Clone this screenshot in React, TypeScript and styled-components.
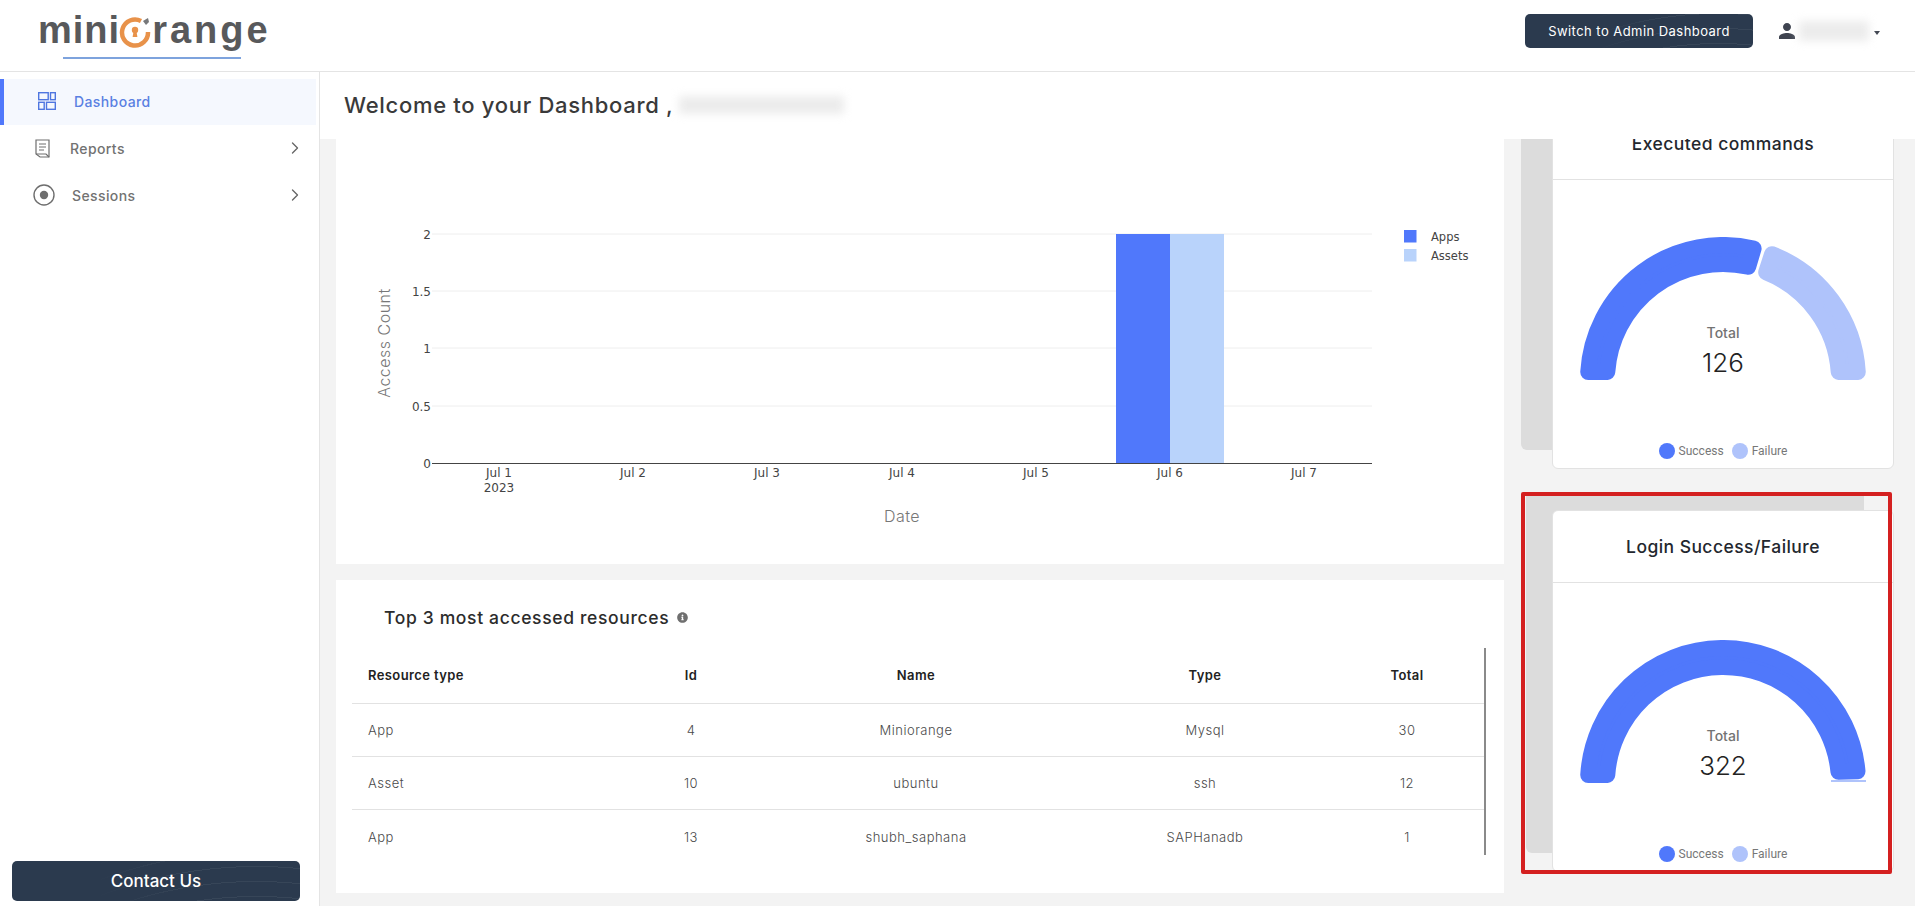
import { ChevronRight } from "lucide-react";
import { FaInfoCircle } from "react-icons/fa";
import { MdPerson } from "react-icons/md";
import styled, { createGlobalStyle } from "styled-components";

const BLUE = "#5078fb";
const LIGHT_BLUE = "#afc3fb";
const BAR_LIGHT = "#b9d3fb";
const UI_FONT = `Inter, "Noto Sans", sans-serif`;

const GlobalStyle = createGlobalStyle`
  html, body {
    margin: 0;
    padding: 0;
    background: #fff;
    font-family: ${UI_FONT};
  }
  * {
    box-sizing: border-box;
  }
`;

const Page = styled.div`
  width: 1915px;
  height: 906px;
  overflow: hidden;
  display: flex;
  flex-direction: column;
`;

const Header = styled.header`
  height: 72px;
  flex: none;
  display: flex;
  align-items: flex-start;
  justify-content: space-between;
  border-bottom: 1px solid #e4e4e4;
  padding: 14px 35px 0 38px;
`;

const LogoBox = styled.div`
  display: flex;
  flex-direction: column;
  margin-top: -6px;
`;

const LogoWord = styled.div`
  display: flex;
  align-items: center;
  height: 44px;
  color: #58595b;
  font-family: "Liberation Sans", sans-serif;
  font-size: 38px;
  font-weight: 700;
`;

const LogoPart = styled.span<{ $spacing: number }>`
  letter-spacing: ${(p) => p.$spacing}px;
  line-height: 44px;
`;

const LogoRing = styled.svg`
  width: 32px;
  height: 32px;
  flex: none;
  margin: 4px 1px 0 -1px;
`;

const LogoLine = styled.div`
  width: 178px;
  height: 2px;
  margin: 5px 0 0 25px;
  background: #7ea3dd;
`;

const HeaderRight = styled.div`
  display: flex;
  align-items: center;
`;

const DarkButton = styled.button<{ $large?: boolean }>`
  border: 0;
  color: #fff;
  cursor: pointer;
  font-family: ${UI_FONT};
  background-color: #2b3a4e;
  background-image: linear-gradient(to right, #2b3a4e 30%, rgba(43, 58, 78, 0) 65%),
    repeating-radial-gradient(
      circle at 85% 1100%,
      transparent 0 14px,
      rgba(255, 255, 255, 0.06) 14px 15px
    );
  border-radius: 5px;
  width: ${(p) => (p.$large ? "288px" : "228px")};
  height: ${(p) => (p.$large ? "40px" : "34px")};
  font-size: ${(p) => (p.$large ? "17px" : "13px")};
  font-weight: ${(p) => (p.$large ? 500 : 400)};
  letter-spacing: ${(p) => (p.$large ? "0" : "0.45px")};
`;

const UserBox = styled.div`
  display: flex;
  align-items: center;
  margin-left: 22px;
  color: #3f4450;
`;

const BlurredName = styled.div<{ $width: number; $height: number }>`
  width: ${(p) => p.$width}px;
  height: ${(p) => p.$height}px;
  background: #ececec;
  filter: blur(4px);
`;

const Caret = styled.span`
  width: 0;
  height: 0;
  margin: 4px 0 0 5px;
  border-left: 3.5px solid transparent;
  border-right: 3.5px solid transparent;
  border-top: 4px solid #3f4450;
`;

const Body = styled.div`
  flex: 1;
  min-height: 0;
  display: flex;
`;

const Sidebar = styled.nav`
  width: 320px;
  flex: none;
  display: flex;
  flex-direction: column;
  padding-top: 7px;
  border-right: 1px solid #e4e4e4;
`;

const NavItem = styled.div<{ $active?: boolean; $indent: number }>`
  height: 46px;
  margin: 0 3px 1px 0;
  display: flex;
  align-items: center;
  padding-left: ${(p) => p.$indent}px;
  padding-right: 11px;
  padding-bottom: 2px;
  font-size: 14px;
  font-weight: 500;
  letter-spacing: 0.4px;
  color: ${(p) => (p.$active ? "#5a80e2" : "#727272")};
  background: ${(p) => (p.$active ? "#f5f8fe" : "transparent")};
  border-left: 4px solid ${(p) => (p.$active ? BLUE : "transparent")};
`;

const NavIcon = styled.svg<{ $gap: number }>`
  flex: none;
  margin-right: ${(p) => p.$gap}px;
`;

const NavChevron = styled(ChevronRight)`
  margin-left: auto;
  color: #666;
`;

const SidebarFoot = styled.div`
  margin-top: auto;
  padding: 0 0 5px 12px;
`;

const Main = styled.main`
  flex: 1;
  min-width: 0;
  display: flex;
  flex-direction: column;
`;

const WelcomeBar = styled.div`
  height: 67px;
  flex: none;
  display: flex;
  align-items: center;
  gap: 6px;
  padding: 0 0 2px 24px;
  background: #fff;
  color: #3a3a3a;
  font-size: 22px;
  font-weight: 500;
  letter-spacing: 0.7px;
  position: relative;
  z-index: 2;
`;

const Content = styled.div`
  flex: 1;
  min-height: 0;
  overflow: hidden;
  background: #f3f3f3;
  display: flex;
  gap: 48px;
  padding-left: 16px;
`;

const LeftColumn = styled.div`
  width: 1168px;
  flex: none;
  display: flex;
  flex-direction: column;
  gap: 16px;
`;

const ChartCard = styled.section`
  height: 425px;
  flex: none;
  background: #fff;
`;

const ChartSvg = styled.svg`
  display: block;
  width: 1168px;
  height: 425px;
`;

const TableCard = styled.section`
  height: 313px;
  flex: none;
  background: #fff;
  padding: 0 18px 0 16px;
`;

const TableTitle = styled.h2`
  margin: 0;
  height: 68px;
  padding: 7px 0 0 32px;
  display: flex;
  align-items: center;
  gap: 8px;
  font-size: 17.5px;
  font-weight: 500;
  letter-spacing: 0.65px;
  color: #2c2c2c;
  svg {
    color: #6f6f6f;
  }
`;

const TableWrap = styled.div`
  height: 207px;
  overflow: hidden;
  border-right: 2px solid #8a8a8a;
`;

const Row = styled.div<{ $head?: boolean; $last?: boolean }>`
  display: grid;
  grid-template-columns: 260px 158px 292px 286px 118px;
  align-items: center;
  height: ${(p) => (p.$head ? "56px" : "53px")};
  padding: ${(p) => (p.$head ? "0 19px 2px 0" : "0 19px 0 0")};
  border-bottom: ${(p) => (p.$last ? "none" : "1px solid #e2e2e2")};
  font-size: 13px;
  letter-spacing: ${(p) => (p.$head ? "0.4px" : "0.5px")};
  font-weight: ${(p) => (p.$head ? 600 : 300)};
  color: ${(p) => (p.$head ? "#222" : "#4a4a4a")};
`;

const Cell = styled.div<{ $first?: boolean }>`
  text-align: ${(p) => (p.$first ? "left" : "center")};
  padding-left: ${(p) => (p.$first ? "16px" : "0")};
`;

const RightColumn = styled.div`
  width: 342px;
  flex: none;
  display: flex;
  flex-direction: column;
  gap: 41px;
  margin-top: -32px;
`;

const GaugeSlot = styled.div<{ $marked?: boolean }>`
  position: relative;
  /* grey block that sits behind the card */
  &::before {
    content: "";
    position: absolute;
    top: -18px;
    left: ${(p) => (p.$marked ? "-26px" : "-31px")};
    width: 338px;
    bottom: 19px;
    background: #dcdcdc;
    border-radius: 0 0 0 6px;
  }
  /* hand drawn red mark around the second card */
  &::after {
    content: ${(p) => (p.$marked ? '""' : "none")};
    box-sizing: border-box;
    position: absolute;
    top: -18px;
    left: -31px;
    width: 371px;
    height: 382px;
    border: 4px solid #d42020;
    border-radius: 2px;
  }
`;

const GaugeCard = styled.section`
  position: relative;
  height: 362px;
  background: #fff;
  border: 1px solid #e2e2e2;
  border-radius: 6px;
  display: flex;
  flex-direction: column;
  align-items: center;
`;

const GaugeTitle = styled.h3`
  width: 100%;
  height: 72px;
  flex: none;
  margin: 0;
  padding-bottom: 1px;
  display: flex;
  align-items: center;
  justify-content: center;
  border-bottom: 1px solid #e2e2e2;
  font-size: 17.5px;
  font-weight: 500;
  letter-spacing: 0.45px;
  color: #23272e;
`;

const GaugeSvg = styled.svg`
  display: block;
  margin-top: 57px;
  flex: none;
`;

const Legend = styled.div`
  margin-top: 63px;
  display: flex;
  align-items: center;
  gap: 8px;
  font-family: Roboto, sans-serif;
  font-size: 12px;
  color: #777;
`;

const LegendItem = styled.div`
  display: flex;
  align-items: center;
  gap: 4px;
`;

const LegendDot = styled.span<{ $color: string }>`
  width: 16px;
  height: 16px;
  border-radius: 50%;
  background: ${(p) => p.$color};
`;

// donut piece, angles go from 0 (left end) to 180 (right end)
const R = 143;
const r = 108;
const CORNER = 8;

function point(radius: number, deg: number) {
  const a = (deg * Math.PI) / 180;
  return `${(R - radius * Math.cos(a)).toFixed(2)} ${(R - radius * Math.sin(a)).toFixed(2)}`;
}

function arcPath(from: number, to: number) {
  const outer = R - CORNER;
  const inner = r + CORNER;
  const dOut = ((CORNER / outer) * 180) / Math.PI;
  const dIn = ((CORNER / inner) * 180) / Math.PI;
  return [
    `M ${point(outer, from + dOut)}`,
    `A ${outer} ${outer} 0 0 1 ${point(outer, to - dOut)}`,
    `L ${point(inner, to - dIn)}`,
    `A ${inner} ${inner} 0 0 0 ${point(inner, from + dIn)}`,
    "Z",
  ].join(" ");
}

function GaugeArc({ from, to, color }: { from: number; to: number; color: string }) {
  return (
    <path
      d={arcPath(from, to)}
      fill={color}
      stroke={color}
      strokeWidth={CORNER * 2}
      strokeLinejoin="round"
    />
  );
}

type Gauge = { title: string; total: number; split: number | null };

const gauges: Gauge[] = [
  { title: "Executed commands", total: 126, split: 106.5 },
  { title: "Login Success/Failure", total: 322, split: null },
];

function GaugePanel({ gauge, marked }: { gauge: Gauge; marked?: boolean }) {
  return (
    <GaugeSlot $marked={marked}>
      <GaugeCard>
        <GaugeTitle>{gauge.title}</GaugeTitle>
        <GaugeSvg width="286" height="143" viewBox="0 0 286 143">
          {gauge.split !== null ? (
            <>
              <GaugeArc from={0} to={gauge.split} color={BLUE} />
              <GaugeArc from={gauge.split + 1.4} to={180} color={LIGHT_BLUE} />
            </>
          ) : (
            <>
              <rect x="251" y="140" width="35" height="2" fill={LIGHT_BLUE} />
              <GaugeArc from={0} to={178.4} color={BLUE} />
            </>
          )}
          <text x="143" y="101" textAnchor="middle" fontSize="14" fontWeight="500" fill="#737373">
            Total
          </text>
          <text x="143" y="135" textAnchor="middle" fontSize="26" fontWeight="300" fill="#222">
            {gauge.total}
          </text>
        </GaugeSvg>
        <Legend>
          <LegendItem>
            <LegendDot $color={BLUE} />
            Success
          </LegendItem>
          <LegendItem>
            <LegendDot $color={LIGHT_BLUE} />
            Failure
          </LegendItem>
        </Legend>
      </GaugeCard>
    </GaugeSlot>
  );
}

const gridLines = [
  { y: 234, label: "2" },
  { y: 291, label: "1.5" },
  { y: 348, label: "1" },
  { y: 406, label: "0.5" },
];

const dateTicks = [
  { x: 499, label: "Jul 1" },
  { x: 633, label: "Jul 2" },
  { x: 767, label: "Jul 3" },
  { x: 902, label: "Jul 4" },
  { x: 1036, label: "Jul 5" },
  { x: 1170, label: "Jul 6" },
  { x: 1304, label: "Jul 7" },
];

const TICK_FONT = "DejaVu Sans, sans-serif";

function AccessChart() {
  return (
    <ChartSvg viewBox="336 139 1168 425">
      {gridLines.map((g) => (
        <g key={g.label}>
          <line x1="432" x2="1372" y1={g.y} y2={g.y} stroke="#eeeeee" />
          <text x="431" y={g.y + 5} textAnchor="end" fontFamily={TICK_FONT} fontSize="12" fill="#444">
            {g.label}
          </text>
        </g>
      ))}
      <rect x="1116" y="234" width="54" height="229" fill={BLUE} />
      <rect x="1170" y="234" width="54" height="229" fill={BAR_LIGHT} />
      <line x1="432" x2="1372" y1="463.5" y2="463.5" stroke="#444" />
      <text x="431" y="468" textAnchor="end" fontFamily={TICK_FONT} fontSize="12" fill="#444">
        0
      </text>
      {dateTicks.map((t) => (
        <text key={t.label} x={t.x} y="477" textAnchor="middle" fontFamily={TICK_FONT} fontSize="12" fill="#444">
          {t.label}
        </text>
      ))}
      <text x="499" y="492" textAnchor="middle" fontFamily={TICK_FONT} fontSize="12" fill="#444">
        2023
      </text>
      <text x="902" y="522" textAnchor="middle" fontSize="16" fontWeight="300" letterSpacing="0.5" fill="#777">
        Date
      </text>
      <text
        x="0"
        y="0"
        transform="translate(390 343) rotate(-90)"
        textAnchor="middle"
        fontSize="16"
        fontWeight="300"
        letterSpacing="0.5"
        fill="#777"
      >
        Access Count
      </text>
      <rect x="1404" y="230" width="12.5" height="12.5" fill={BLUE} />
      <rect x="1404" y="249" width="12.5" height="12.5" fill={BAR_LIGHT} />
      <text x="1431" y="241" fontFamily={TICK_FONT} fontSize="11.5" fill="#444">
        Apps
      </text>
      <text x="1431" y="260" fontFamily={TICK_FONT} fontSize="11.5" fill="#444">
        Assets
      </text>
    </ChartSvg>
  );
}

const resources = [
  { kind: "App", id: 4, name: "Miniorange", type: "Mysql", total: 30 },
  { kind: "Asset", id: 10, name: "ubuntu", type: "ssh", total: 12 },
  { kind: "App", id: 13, name: "shubh_saphana", type: "SAPHanadb", total: 1 },
];

export default function App() {
  return (
    <>
      <GlobalStyle />
      <Page>
        <Header>
          <LogoBox>
            <LogoWord>
              <LogoPart $spacing={1}>mini</LogoPart>
              <LogoRing viewBox="0 0 32 32">
                <path
                  d="M22 5 A13 13 0 1 0 29 16"
                  fill="none"
                  stroke="#e8924a"
                  strokeWidth="4.5"
                />
                <circle cx="16" cy="14" r="3.2" fill="#e8924a" />
                <path d="M14.6 15 h2.8 l1 6 h-4.8 z" fill="#e8924a" />
                <path d="M24 5 l5-3 1 4-3 3z" fill="#77787a" />
              </LogoRing>
              <LogoPart $spacing={3}>range</LogoPart>
            </LogoWord>
            <LogoLine />
          </LogoBox>
          <HeaderRight>
            <DarkButton>Switch to Admin Dashboard</DarkButton>
            <UserBox>
              <MdPerson size={24} />
              <BlurredName $width={70} $height={20} />
              <Caret />
            </UserBox>
          </HeaderRight>
        </Header>
        <Body>
          <Sidebar>
            <NavItem $active $indent={34}>
              <NavIcon $gap={18} width="18" height="18" viewBox="0 0 18 18" fill="none" stroke="#4f76e0" strokeWidth="1.4">
                <rect x="0.7" y="0.7" width="9.5" height="7" />
                <rect x="12.5" y="0.7" width="4.8" height="7" />
                <rect x="0.7" y="10.3" width="5.5" height="7" />
                <rect x="8.5" y="10.3" width="8.8" height="7" />
              </NavIcon>
              Dashboard
            </NavItem>
            <NavItem $indent={31}>
              <NavIcon $gap={19} width="16" height="19" viewBox="0 0 16 19" fill="none" stroke="#6e6e6e" strokeWidth="1.2">
                <path d="M1 1 H14 V18 H5 L1 15 Z" />
                <path d="M1 15 H11 L14 18" />
                <path d="M4 5 H11 M4 8 H11 M4 11 H9" />
              </NavIcon>
              Reports
              <NavChevron size={20} strokeWidth={1.6} />
            </NavItem>
            <NavItem $indent={29}>
              <NavIcon $gap={17} width="22" height="22" viewBox="0 0 22 22" fill="none">
                <circle cx="11" cy="11" r="10" stroke="#6e6e6e" strokeWidth="1.4" />
                <circle cx="11" cy="11" r="4.2" fill="#6e6e6e" />
              </NavIcon>
              Sessions
              <NavChevron size={20} strokeWidth={1.6} />
            </NavItem>
            <SidebarFoot>
              <DarkButton $large>Contact Us</DarkButton>
            </SidebarFoot>
          </Sidebar>
          <Main>
            <WelcomeBar>
              Welcome to your Dashboard ,
              <BlurredName $width={165} $height={18} />
            </WelcomeBar>
            <Content>
              <LeftColumn>
                <ChartCard>
                  <AccessChart />
                </ChartCard>
                <TableCard>
                  <TableTitle>
                    Top 3 most accessed resources
                    <FaInfoCircle size={11} />
                  </TableTitle>
                  <TableWrap>
                    <Row $head>
                      <Cell $first>Resource type</Cell>
                      <Cell>Id</Cell>
                      <Cell>Name</Cell>
                      <Cell>Type</Cell>
                      <Cell>Total</Cell>
                    </Row>
                    {resources.map((item, i) => (
                      <Row key={item.id} $last={i === resources.length - 1}>
                        <Cell $first>{item.kind}</Cell>
                        <Cell>{item.id}</Cell>
                        <Cell>{item.name}</Cell>
                        <Cell>{item.type}</Cell>
                        <Cell>{item.total}</Cell>
                      </Row>
                    ))}
                  </TableWrap>
                </TableCard>
              </LeftColumn>
              <RightColumn>
                <GaugePanel gauge={gauges[0]} />
                <GaugePanel gauge={gauges[1]} marked />
              </RightColumn>
            </Content>
          </Main>
        </Body>
      </Page>
    </>
  );
}
